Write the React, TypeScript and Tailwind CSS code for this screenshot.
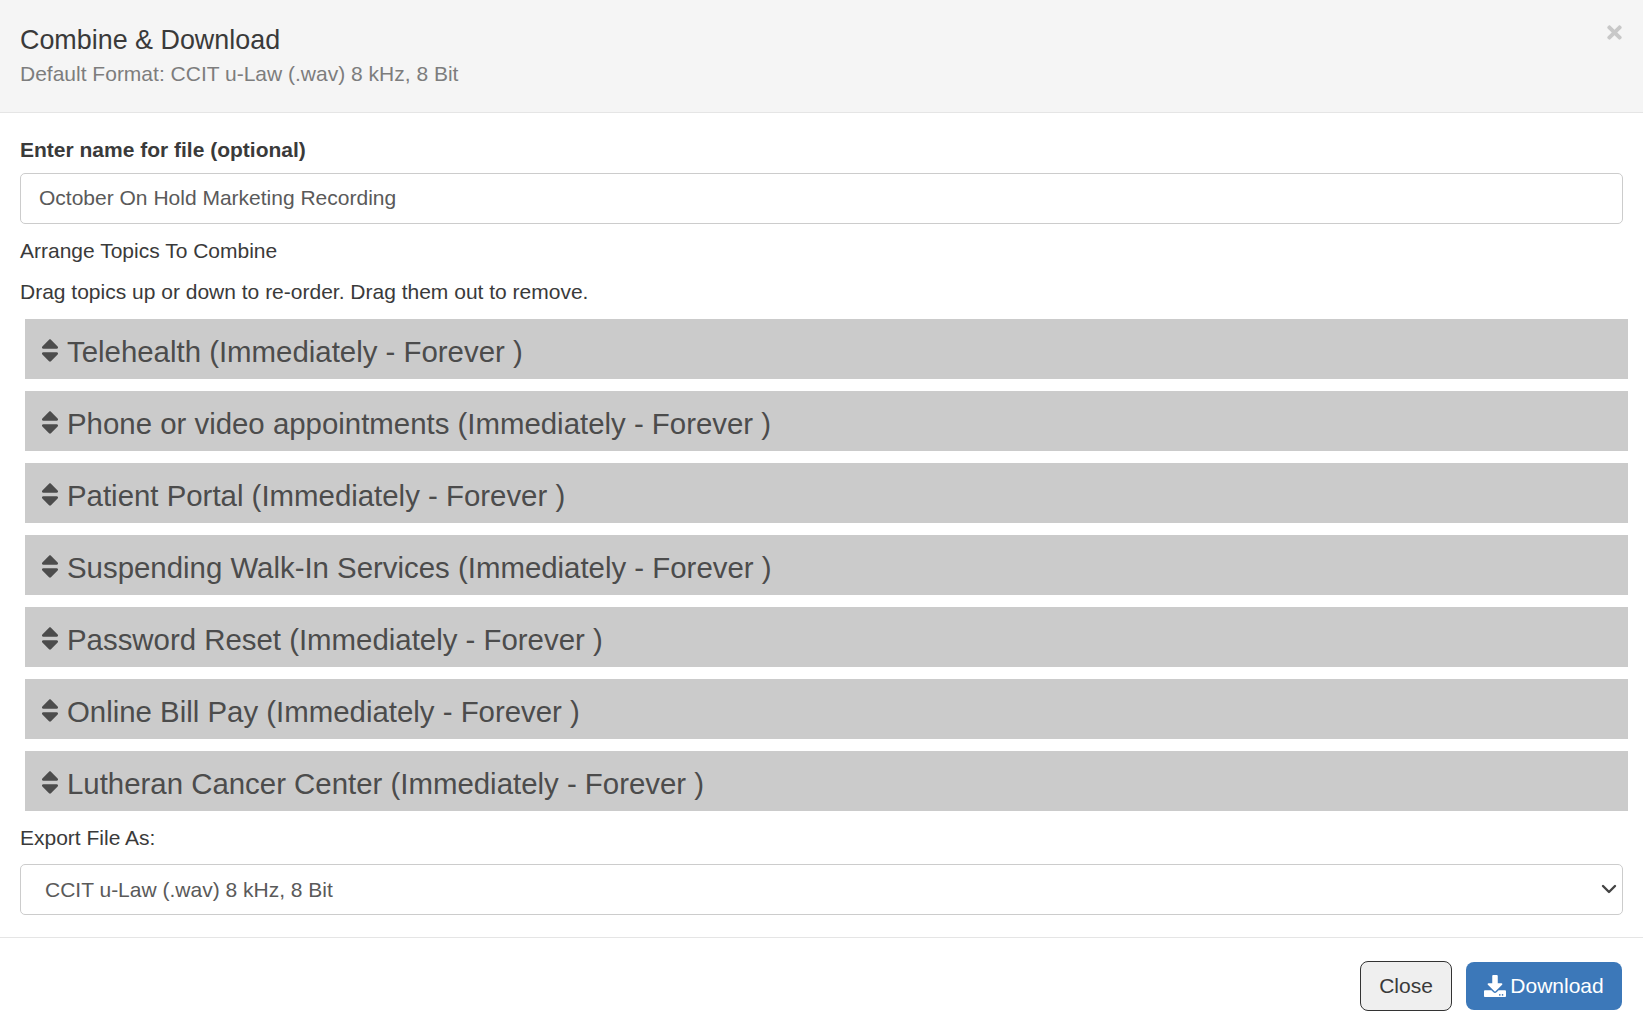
import React from 'react';
import { FaSort, FaDownload, FaTimes } from 'react-icons/fa';
import { ChevronDown } from 'lucide-react';

const topics = [
  'Telehealth',
  'Phone or video appointments',
  'Patient Portal',
  'Suspending Walk-In Services',
  'Password Reset',
  'Online Bill Pay',
  'Lutheran Cancer Center',
];

const App = () => {
  return (
    <div className="w-full h-[1029px] bg-white overflow-hidden text-[#3a3a3a] font-['Liberation_Sans',Arial,sans-serif]">
      {/* header */}
      <div className="relative h-[113px] bg-[#f5f5f5] border-b border-[#e5e5e5] pl-5 pt-[24px]">
        <h4 className="text-[26.9px] leading-[32px] text-[#3a3a3a]">Combine &amp; Download</h4>
        <div className="mt-[5px] text-[21px] leading-[26px] text-[#7d7d7d]">Default Format: CCIT u-Law (.wav) 8 kHz, 8 Bit</div>
        <button className="absolute right-[18px] top-[22px] text-[#c8c8c8] text-[21px]"><FaTimes /></button>
      </div>

      {/* body */}
      <div className="pl-5 pr-[20px] pt-[22px]">
        <label className="block text-[21px] leading-[30px] font-bold">Enter name for file (optional)</label>
        <input
          readOnly
          value="October On Hold Marketing Recording"
          className="block mt-[8px] w-full h-[51px] pl-[18px] pr-[18px] pb-[2px] text-[21px] text-[#5a5a5a] bg-white border border-[#ccc] rounded-[5px] outline-none"
        />
        <p className="mt-[13px] text-[21px] leading-[28px]">Arrange Topics To Combine</p>
        <p className="mt-[13px] text-[21px] leading-[28px]">Drag topics up or down to re-order. Drag them out to remove.</p>

        <div className="mt-[13px] ml-[5px] mr-[-5px] flex flex-col gap-3">
          {topics.map((t) => (
            <div key={t} className="h-[60px] bg-[#cbcbcb] pl-[16px] pt-[13px] flex items-start gap-[8px] text-[#4c4c4c]">
              <FaSort className="mt-[4px] shrink-0 w-[18px] h-[29px]" />
              <span className="text-[29.4px] leading-[40px]">{t} (Immediately - Forever )</span>
            </div>
          ))}
        </div>

        <p className="mt-[13px] text-[21px] leading-[28px]">Export File As:</p>
        <div className="relative mt-[12px]">
          <select className="block w-full h-[51px] pl-[24px] pr-2 text-[21px] text-[#5a5a5a] bg-white border border-[#ccc] rounded-[5px] outline-none appearance-none">
            <option>CCIT u-Law (.wav) 8 kHz, 8 Bit</option>
          </select>
          <ChevronDown className="absolute right-[2px] top-[13px] w-[24px] h-[24px] text-[#444] pointer-events-none" strokeWidth={2.4} />
        </div>
      </div>

      {/* footer */}
      <div className="mt-[22px] border-t border-[#e5e5e5] pr-[21px] pt-[23px] flex justify-end items-center gap-[14px]">
        <button className="w-[92px] h-[50px] text-[21px] text-[#3a3a3a] bg-[#efefef] border border-[#333] rounded-[8px]">Close</button>
        <button className="w-[156px] h-[48px] text-[21px] text-white bg-[#3c78b9] rounded-[8px] flex items-center justify-center gap-[4px]">
          <FaDownload className="text-[22px]" />
          Download
        </button>
      </div>
    </div>
  );
};

export default App;
